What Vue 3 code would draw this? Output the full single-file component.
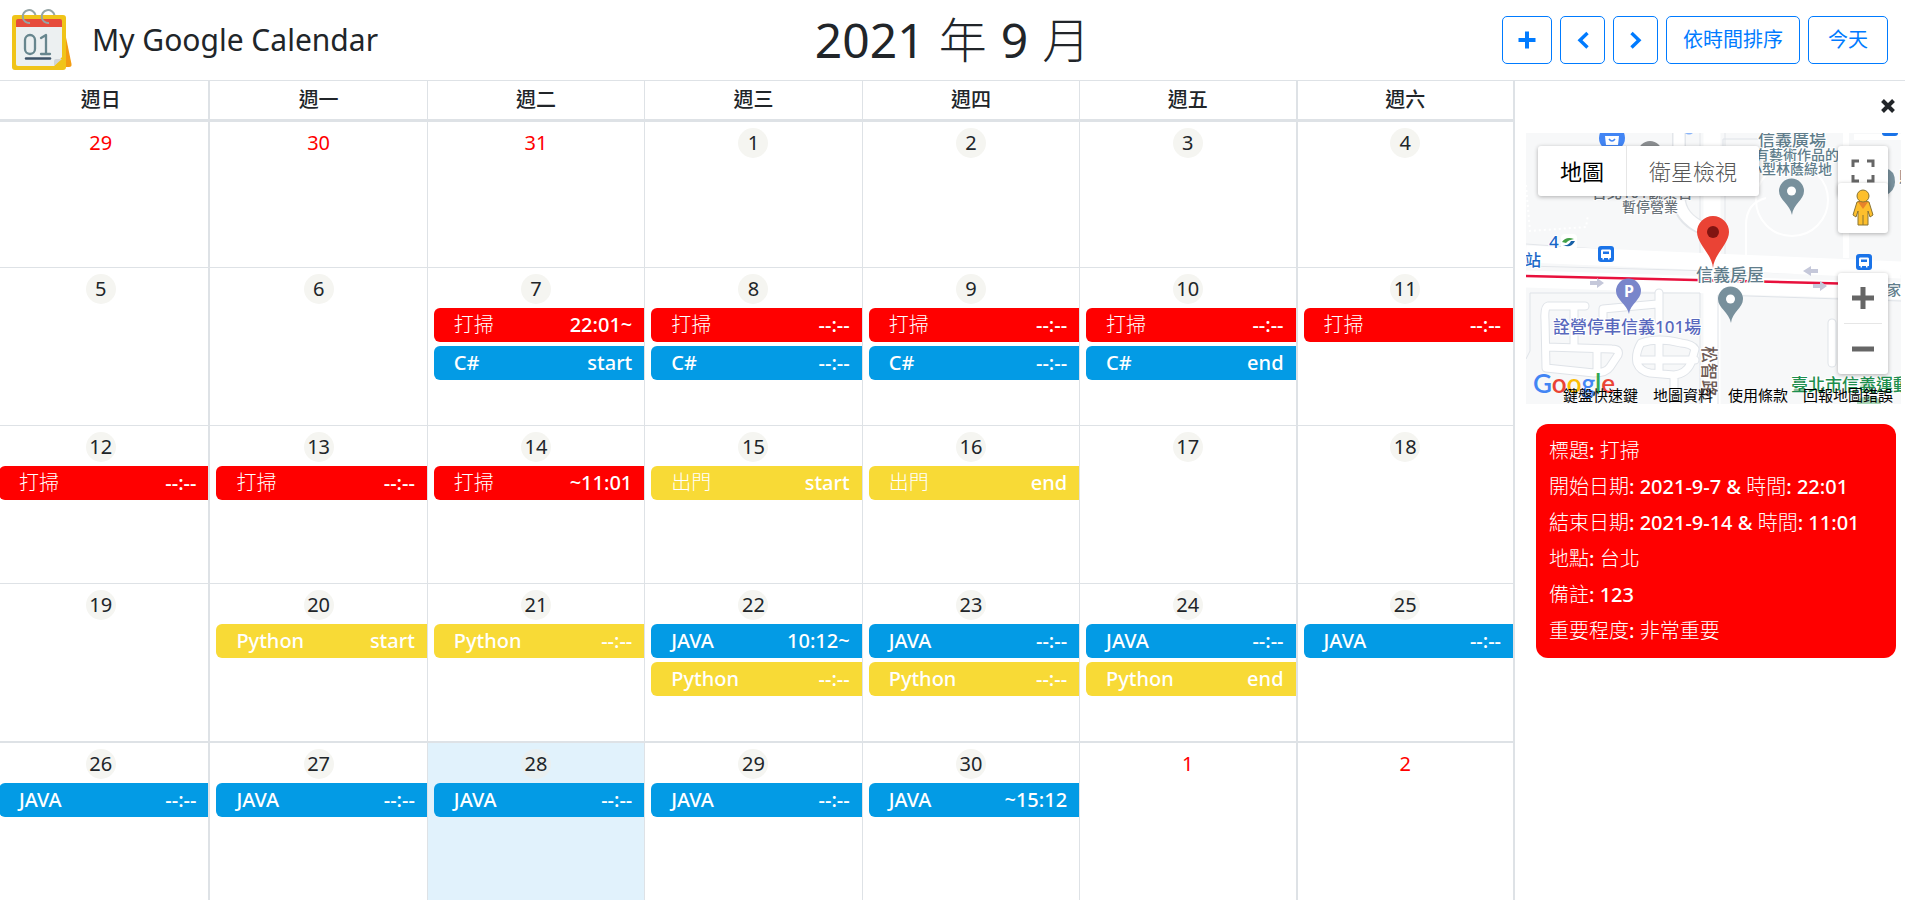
<script setup>
const weekdays = ['週日', '週一', '週二', '週三', '週四', '週五', '週六']

const clean = (time = '--:--') => ({ title: '打掃', time, color: 'red' })
const csharp = (time = '--:--') => ({ title: 'C#', time, color: 'blue' })
const out = (time) => ({ title: '出門', time, color: 'yellow' })
const python = (time = '--:--') => ({ title: 'Python', time, color: 'yellow' })
const java = (time = '--:--') => ({ title: 'JAVA', time, color: 'blue' })

const day = (n, ...events) => ({ n, events })
const other = (n) => ({ n, events: [], other: true })

const weeks = [
  [other(29), other(30), other(31), day(1), day(2), day(3), day(4)],
  [
    day(5),
    day(6),
    day(7, clean('22:01~'), csharp('start')),
    day(8, clean(), csharp()),
    day(9, clean(), csharp()),
    day(10, clean(), csharp('end')),
    day(11, clean())
  ],
  [
    day(12, clean()),
    day(13, clean()),
    day(14, clean('~11:01')),
    day(15, out('start')),
    day(16, out('end')),
    day(17),
    day(18)
  ],
  [
    day(19),
    day(20, python('start')),
    day(21, python()),
    day(22, java('10:12~'), python()),
    day(23, java(), python()),
    day(24, java(), python('end')),
    day(25, java())
  ],
  [
    day(26, java()),
    day(27, java()),
    { ...day(28, java()), today: true },
    day(29, java()),
    day(30, java('~15:12')),
    other(1),
    other(2)
  ]
]

const details = [
  '標題: 打掃',
  '開始日期: 2021-9-7 & 時間: 22:01',
  '結束日期: 2021-9-14 & 時間: 11:01',
  '地點: 台北',
  '備註: 123',
  '重要程度: 非常重要'
]

// Splits a text into Han and non-Han runs, which are set in different weights.
const isHan = (text) => /\p{Script=Han}/u.test(text)
const runs = (text) => text.match(/\p{Script=Han}+|\P{Script=Han}+/gu)
</script>

<template>
  <div class="page">
    <header class="topbar">
      <div class="brand">
        <svg class="logo" viewBox="0 0 60 60" aria-hidden="true">
          <path d="M50 8 59.500 54Q60 57 57 57H48Z" fill="#f39c12" />
          <rect x="0" y="5" width="54" height="55" rx="3" fill="#f0c419" />
          <path d="M4 17H50V47L42 56H6Q4 56 4 54Z" fill="#ecf0f1" />
          <path d="M4 17V11Q4 9 6 9H48Q50 9 50 11V17Z" fill="#e64c3c" />
          <path d="M42 56V51Q42 49 44 49H50Z" fill="#d0d5d9" />
          <g fill="none" stroke="#95a5a5" stroke-width="2">
            <path d="M18 13A6.500 6.500 0 1 1 23.500 5" />
            <path d="M37 13A6.500 6.500 0 1 1 42.500 5" />
          </g>
          <g fill="none" stroke="#67868e" stroke-width="2.300" stroke-linecap="round" stroke-linejoin="round">
            <rect x="13" y="25" width="10" height="19" rx="5" />
            <path d="M29 28 34 25V44M29 44H38" />
          </g>
          <path d="M14 48.500H38" stroke="#3d5368" stroke-width="2.500" stroke-linecap="round" />
        </svg>
        <span class="brand-name">My Google Calendar</span>
      </div>
      <h1>
        <span>2021</span>
        <span class="thin">年</span>
        <span>9</span>
        <span class="thin">月</span>
      </h1>
      <nav class="actions">
        <button type="button" class="btn add" aria-label="新增">
          <svg viewBox="0 0 18 18"><path d="M9 .5V17.500M.5 9H17.500" stroke-width="4" /></svg>
        </button>
        <button type="button" class="btn arrow" aria-label="上個月">
          <svg viewBox="0 0 18 18"><path d="M13.500 2 6 9.200 13.500 16.500" stroke-width="3.400" /></svg>
        </button>
        <button type="button" class="btn arrow" aria-label="下個月">
          <svg viewBox="0 0 18 18"><path d="M4.500 2 12 9.200 4.500 16.500" stroke-width="3.400" /></svg>
        </button>
        <button type="button" class="btn sort">依時間排序</button>
        <button type="button" class="btn today-btn">今天</button>
      </nav>
    </header>

    <div class="content">
      <main class="calendar">
        <table>
          <thead>
            <tr>
              <th v-for="w in weekdays" :key="w" scope="col">{{ w }}</th>
            </tr>
          </thead>
          <tbody>
            <tr v-for="(week, i) in weeks" :key="i">
              <td v-for="(d, j) in week" :key="j" :class="{ today: d.today, other: d.other }">
                <div class="date">{{ d.n }}</div>
                <div v-for="e in d.events" :key="e.title" class="event" :class="e.color">
                  <span :class="{ thin: isHan(e.title) }">{{ e.title }}</span>
                  <span>{{ e.time }}</span>
                </div>
              </td>
            </tr>
          </tbody>
        </table>
      </main>

      <aside class="side">
        <button type="button" class="close" aria-label="關閉">
          <svg viewBox="0 0 14 14"><path d="M1.500 1.500 12.500 12.500M12.500 1.500 1.500 12.500" /></svg>
        </button>

        <div class="map">
          <svg class="map-canvas" viewBox="0 0 375 271" preserveAspectRatio="xMidYMid slice">
            <rect width="375" height="271" fill="#f7f8f9" />
            <g fill="none" stroke="#e3e6ea">
              <path d="M0 111 174 123V0M199 0V123L375 130M0 133 375 143" stroke-width="1" />
              <path d="M153 0V64Q153 84 174 94" stroke-width="14" />
            </g>
            <g fill="none" stroke="#fff">
              <path d="M153 0V64Q153 84 178 96" stroke-width="11" />
              <path d="M186 0V271" stroke-width="17" />
              <path d="M0 121 375 137" stroke-width="17" />
              <path d="M0 146 375 158" stroke-width="17" />
              <path d="M320 0V125M328 4H375" stroke-width="6" />
              <circle cx="266" cy="67" r="36" stroke-width="2" />
              <path d="M220 124V92Q220 70 240 65M290 40 312 20" stroke-width="2" />
              <path d="M0 52 4 98 60 94 62 82" stroke-width="2" stroke-dasharray="2 3" />
            </g>
            <g fill="none" stroke="#dfe3e8" stroke-width="1">
              <path d="M4 218V160H130V184M136 160H174V271M192 271V162L375 168M197 45V6H238M0 226 4 218" />
            </g>
            <g fill="none" stroke="#dfe3e8" stroke-width="9" stroke-linejoin="round" stroke-linecap="round">
              <path d="M59 173H22Q18 174 19 187L20 235 68 240Q80 240 84 234L92 222Q94 216 86 216L20 214M48 174V214M71 216V239M77 187V176L131 171M133 160V187M115 210Q109 220 111 230 114 238 124 240L148 242Q160 241 165 230L169 216Q166 211 155 210 132 204 115 210ZM133 208V240M111 227H169M148 242V260M306 230V190" />
            </g>
            <g fill="none" stroke="#fff" stroke-width="7" stroke-linejoin="round" stroke-linecap="round">
              <path d="M59 173H22Q18 174 19 187L20 235 68 240Q80 240 84 234L92 222Q94 216 86 216L20 214M48 174V214M71 216V239M77 187V176L131 171M133 160V187M115 210Q109 220 111 230 114 238 124 240L148 242Q160 241 165 230L169 216Q166 211 155 210 132 204 115 210ZM133 208V240M111 227H169M148 242V260M306 230V190" />
            </g>
            <ellipse cx="343" cy="270" rx="12" ry="7" fill="#a8d5b5" />
            <path d="M0 143 375 152" stroke="#e8103c" stroke-width="2.500" />
            <g fill="#c5c8da">
              <path d="M64 148H71V145L78 150 71 155V152H64Z" />
              <path d="M292 136H285V133L277 138 285 143V140H292Z" />
              <path d="M287 151H294V148L301 153 294 158V155H287Z" />
            </g>

            <circle cx="86" cy="5" r="13" fill="#4285f4" />
            <path d="M79 3H93L92 12H80Z" fill="#fff" />
            <path d="M83 6Q86 10 89 6" fill="none" stroke="#4285f4" stroke-width="1.500" />
            <circle cx="124" cy="20" r="12" fill="#8b8e91" />
            <path d="M159 0Q163 3 167 0Z" fill="#8ab4f8" />
            <rect x="356" y="-12" width="16" height="15" rx="3" fill="#1a73e8" />
            <path d="M359 35Q369 37 369 49Q369 58 359 63Z" fill="#78909c" />

            <g id="bus-stop">
              <rect x="72" y="113" width="16" height="16" rx="3" fill="#1a73e8" />
              <path d="M76 116.500H84Q85 116.500 85 118V125H83.500V126.500H82V125H78V126.500H76.500V125H75V118Q75 116.500 76 116.500Z" fill="#fff" />
              <path d="M77 118.500H83V121H77Z" fill="#1a73e8" />
            </g>
            <use href="#bus-stop" x="258" y="8" />

            <g id="pin">
              <path d="M266 82C264 71 253 67 253 58A12.500 12.500 0 0 1 278 58C278 67 267 71 266 82Z" fill="#78909c" />
              <circle cx="265.500" cy="58" r="4.500" fill="#fff" />
            </g>
            <use href="#pin" x="-61" y="108" />
            <path d="M103 181C101 171 90 167 90 158A12.500 12.500 0 0 1 115 158C115 167 104 171 103 181Z" fill="#7986cb" />

            <rect x="35" y="101" width="16" height="16" rx="4" fill="#fff" />
            <path d="M36 109Q40 103 48 106Q42 107 40 110Z" fill="#43a047" />
            <path d="M37 112Q43 113 45 108H49Q45 116 37 112Z" fill="#1a62a8" />

            <g class="label">
              <text x="232" y="13" font-size="17" fill="#607d8b">信義廣場</text>
              <text x="229" y="27" font-size="14" fill="#607d8b">有藝術作品的</text>
              <text x="222" y="41" font-size="14" fill="#607d8b">小型林蔭綠地</text>
              <text x="66" y="65" font-size="15" fill="#6b747b">台北101觀景台</text>
              <text x="96" y="79" font-size="14" fill="#6b747b">暫停營業</text>
              <text x="23" y="115" font-size="17" fill="#1967c8">4</text>
              <text x="-1" y="133" font-size="16" fill="#1967c8">站</text>
              <text x="170" y="148" font-size="17" fill="#607d8b">信義房屋</text>
              <text x="27" y="200" font-size="17" fill="#5868bd">詮營停車信義101場</text>
              <text x="361" y="162" font-size="14" fill="#607d8b">家商</text>
              <text x="373" y="49" font-size="15" fill="#607d8b">財</text>
              <text x="265" y="258" font-size="17" fill="#1e8e4e">臺北市信義運動</text>
              <text transform="translate(177 213) rotate(90)" font-size="17" fill="#6d5a55">松智路</text>
            </g>
            <text x="98" y="164" class="parking">P</text>

            <text class="google" x="7" y="260"><tspan fill="#4285f4">G</tspan><tspan fill="#ea4335">o</tspan><tspan fill="#fbbc05">o</tspan><tspan fill="#4285f4">g</tspan><tspan fill="#34a853">l</tspan><tspan fill="#ea4335">e</tspan></text>
            <path d="M187 135C186 121 171 111 171 99A16 16 0 0 1 203 99C203 111 188 121 187 135Z" fill="#ea4335" />
            <circle cx="187" cy="99" r="6" fill="#811411" />
          </svg>

          <div class="map-types">
            <button type="button" class="selected">地圖</button>
            <button type="button">衛星檢視</button>
          </div>
          <button type="button" class="map-btn full" aria-label="全螢幕">
            <svg viewBox="0 0 24 24"><path d="M2 8V2H8M16 2H22V8M22 16V22H16M8 22H2V16" fill="none" stroke="#666" stroke-width="3" /></svg>
          </button>
          <button type="button" class="map-btn person" aria-label="街景">
            <svg viewBox="0 0 24 38">
              <path d="M6 13Q12 10 18 13L22 26 19 28 17 22V36H7V22L5 28 2 26Z" fill="#fdbf2d" stroke="#8a7432" />
              <path d="M7 13H17L12 20Z" fill="#e8832a" />
              <path d="M12 26V36" stroke="#8a7432" />
              <circle cx="12" cy="7" r="6" fill="#fdbf2d" stroke="#8a7432" />
            </svg>
          </button>
          <div class="zoom">
            <button type="button" aria-label="放大">
              <svg viewBox="0 0 24 24"><path d="M12 1V23M1 12H23" stroke="#666" stroke-width="5" /></svg>
            </button>
            <button type="button" aria-label="縮小">
              <svg viewBox="0 0 24 24"><path d="M1 12H23" stroke="#666" stroke-width="5" /></svg>
            </button>
          </div>
          <div class="legal">
            <a href="#">鍵盤快速鍵</a>
            <a href="#">地圖資料</a>
            <a href="#">使用條款</a>
            <a href="#">回報地圖錯誤</a>
          </div>
        </div>

        <section class="detail">
          <p v-for="line in details" :key="line">
            <span v-for="(part, k) in runs(line)" :key="k" :class="{ thin: isHan(part) }">{{ part }}</span>
          </p>
        </section>
      </aside>
    </div>
  </div>
</template>

<style>
body {
  background: #fff;
}
</style>

<style scoped>
.page {
  display: flex;
  flex-direction: column;
  height: 100vh;
  overflow: hidden;
  color: #212529;
  font-family: 'Noto Sans', 'Noto Sans CJK TC', sans-serif;
  font-size: 20px;
  line-height: 30px;
}

.page * {
  box-sizing: border-box;
}

button {
  font: inherit;
  cursor: pointer;
}

.topbar {
  display: grid;
  grid-template-columns: 1fr auto 1fr;
  align-items: center;
  flex: none;
  height: 81px;
  padding: 0 12px;
  border-bottom: 1px solid #dee2e6;
}

.brand {
  display: flex;
  align-items: center;
  gap: 20px;
}

.logo {
  width: 60px;
  height: 60px;
  overflow: visible;
}

.brand-name {
  font-size: 30px;
}

h1 {
  display: flex;
  align-items: baseline;
  gap: 14px;
  margin: 0;
  font-size: 48px;
  font-weight: 400;
  line-height: 60px;
}

.thin {
  font-weight: 300;
}

.actions {
  display: flex;
  justify-content: flex-end;
  gap: 8px;
  margin-right: 5px;
}

.btn {
  display: flex;
  align-items: center;
  justify-content: center;
  height: 48px;
  padding: 0;
  border: 1px solid #007bff;
  border-radius: 5px;
  background: #fff;
  color: #007bff;
}

.btn svg {
  width: 18px;
  height: 18px;
  fill: none;
  stroke: currentColor;
}

.add {
  width: 50px;
}

.arrow {
  width: 45px;
}

.sort {
  padding: 0 16px;
}

.today-btn {
  padding: 0 19px;
}

.content {
  display: flex;
  flex: 1;
  min-height: 0;
}

.calendar {
  flex: 1;
  min-width: 0;
  overflow: hidden;
}

table {
  width: calc(100% + 7px);
  margin-left: -7px;
  border-collapse: separate;
  border-spacing: 0;
  table-layout: fixed;
}

th {
  height: 41px;
  padding: 0;
  border-right: 1px solid #dee2e6;
  border-bottom: 3px solid #dee2e6;
  font-weight: 500;
}

td {
  height: 158px;
  padding: 6px 0 0 6px;
  border-right: 1px solid #dee2e6;
  border-bottom: 1px solid #dee2e6;
  vertical-align: top;
}

tbody tr:first-child td {
  height: 146px;
}

tbody tr:nth-child(4) td {
  height: 159px;
  border-bottom-width: 2px;
}

th:first-child,
td:first-child,
th:nth-child(6),
td:nth-child(6),
th:last-child,
td:last-child {
  border-right-width: 2px;
}

.date {
  width: 30px;
  height: 30px;
  margin: 0 auto 4px;
  border-radius: 50%;
  background: #f5f5f1;
  text-align: center;
  position: relative;
  left: -3px;
}

.other .date {
  background: none;
  color: #f00;
}

.today {
  background: #e1f2fc;
}

.today .date {
  background: #e9eff0;
}

.event {
  display: flex;
  justify-content: space-between;
  height: 34px;
  margin-bottom: 4px;
  padding: 0 12px 0 20px;
  border-radius: 6px 0 0 6px;
  color: #fff;
  font-weight: 500;
  line-height: 34px;
}

.red {
  background: #f00;
}

.blue {
  background: #039be5;
}

.yellow {
  background: #f8da36;
}

.side {
  display: flex;
  flex-direction: column;
  flex: none;
  width: 390px;
  padding: 18px 4px 0 11px;
}

.close {
  display: block;
  align-self: flex-end;
  width: 14px;
  height: 14px;
  margin: 0 6px 20px 0;
  padding: 0;
  border: 0;
  background: none;
}

.close svg {
  display: block;
  width: 14px;
  height: 14px;
  overflow: visible;
  stroke: #212529;
  stroke-width: 4;
}

.map {
  position: relative;
  height: 271px;
  overflow: hidden;
}

.map-canvas {
  display: block;
  width: 100%;
  height: 100%;
}

.label text {
  font-weight: 500;
  paint-order: stroke;
  stroke: #fff;
  stroke-width: 2px;
}

.parking {
  fill: #fff;
  font-size: 16px;
  font-weight: 700;
}

.google {
  font-family: Lato, sans-serif;
  font-size: 26px;
  font-weight: 600;
}

.map-types {
  position: absolute;
  top: 13px;
  left: 12px;
  display: flex;
  height: 50px;
  border-radius: 3px;
  background: #fff;
  box-shadow: 0 1px 4px rgba(0, 0, 0, 0.3);
}

.map-types button {
  padding: 0 22px;
  border: 0;
  background: none;
  color: #565656;
  font-size: 22px;
  font-weight: 300;
}

.map-types .selected {
  border-right: 1px solid #e6e6e6;
  color: #000;
  font-weight: 400;
}

.map-btn,
.zoom {
  position: absolute;
  right: 13px;
  display: flex;
  align-items: center;
  justify-content: center;
  width: 50px;
  height: 50px;
  padding: 0;
  border: 0;
  border-radius: 3px;
  background: #fff;
  box-shadow: 0 1px 4px rgba(0, 0, 0, 0.3);
}

.full {
  top: 13px;
}

.full svg {
  width: 24px;
  height: 24px;
}

.person {
  top: 50px;
}

.person svg {
  width: 24px;
  height: 38px;
}

.zoom {
  top: 140px;
  flex-direction: column;
  height: 101px;
}

.zoom button {
  display: flex;
  align-items: center;
  justify-content: center;
  flex: 1;
  width: 38px;
  padding: 0;
  border: 0;
  background: none;
}

.zoom button + button {
  border-top: 1px solid #e6e6e6;
}

.zoom svg {
  width: 24px;
  height: 24px;
}

.legal {
  position: absolute;
  right: 8px;
  bottom: 0;
  display: flex;
  gap: 15px;
  font-size: 15px;
  line-height: 18px;
}

.legal a {
  color: #000;
  text-decoration: none;
}

.detail {
  margin: 20px 5px 0 10px;
  padding: 9px 13px;
  border-radius: 12px;
  background: #f00;
  color: #fff;
  font-weight: 500;
}

.detail p {
  margin: 0;
  line-height: 36px;
}

.detail span {
  white-space: pre-wrap;
}
</style>
